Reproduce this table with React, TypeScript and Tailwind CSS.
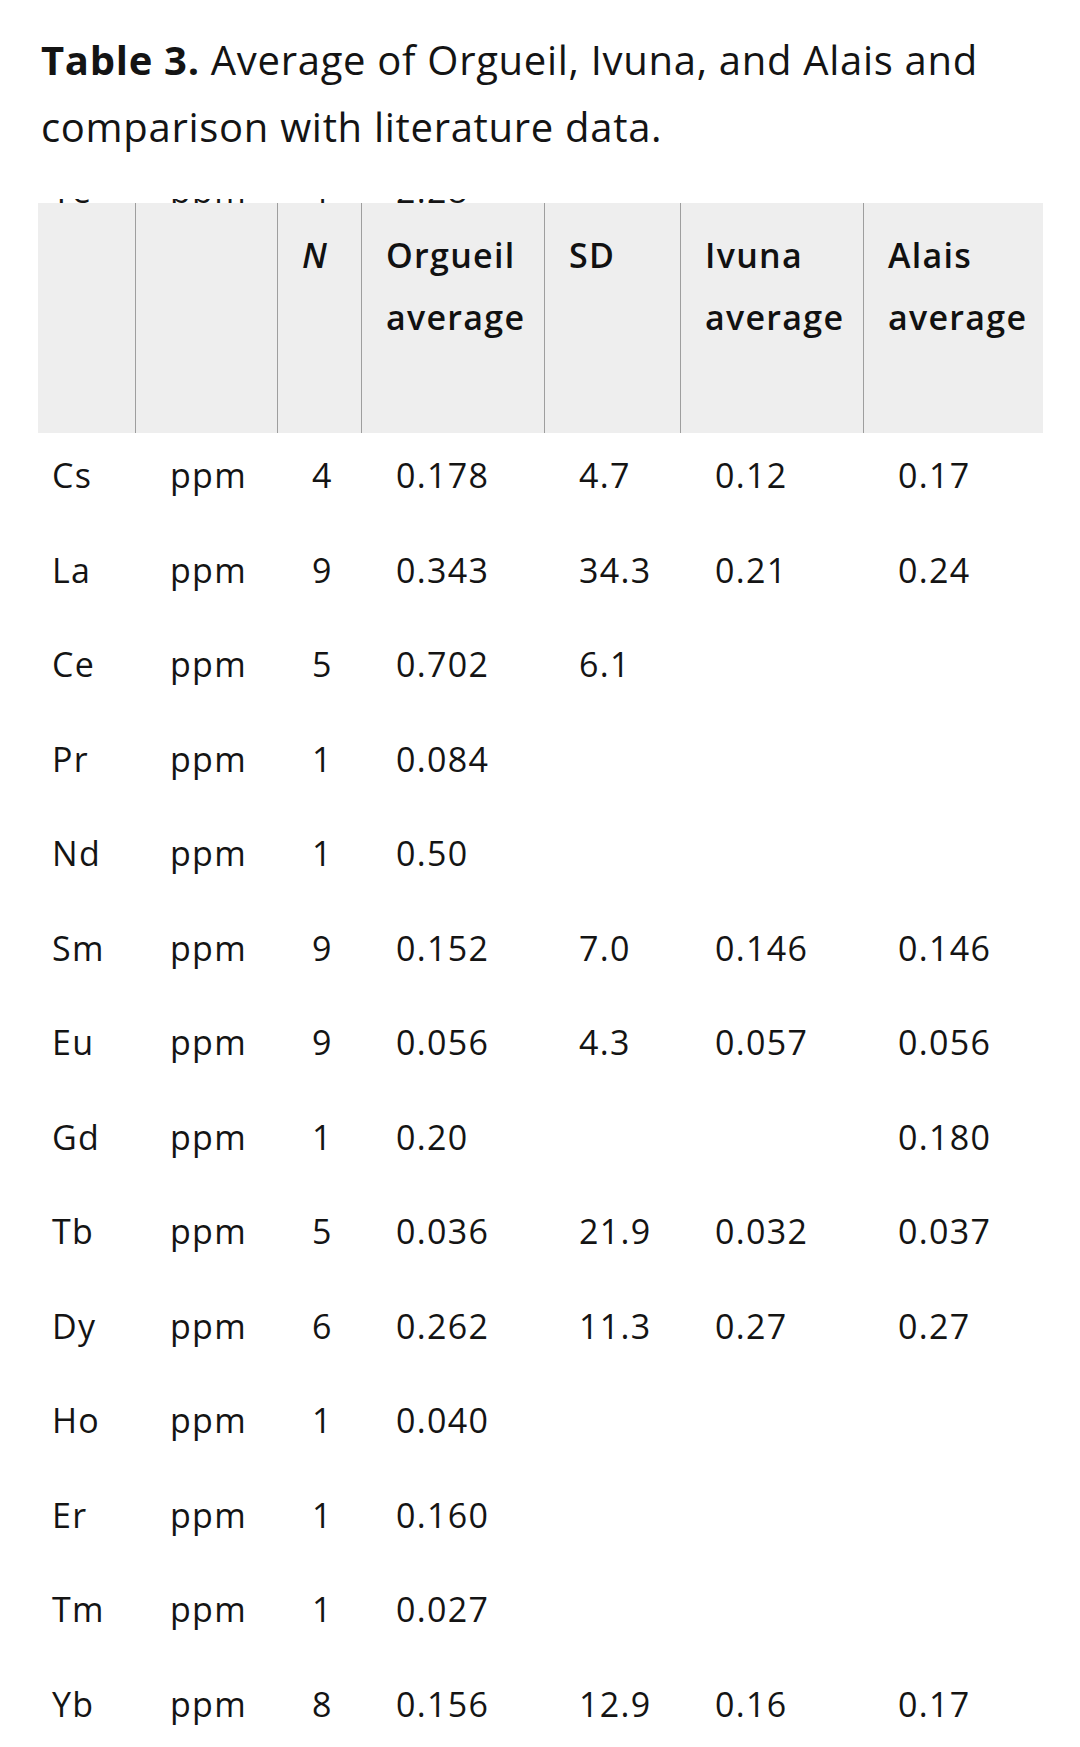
const rows: string[][] = [
  ["Cs", "ppm", "4", "0.178", "4.7", "0.12", "0.17"],
  ["La", "ppm", "9", "0.343", "34.3", "0.21", "0.24"],
  ["Ce", "ppm", "5", "0.702", "6.1", "", ""],
  ["Pr", "ppm", "1", "0.084", "", "", ""],
  ["Nd", "ppm", "1", "0.50", "", "", ""],
  ["Sm", "ppm", "9", "0.152", "7.0", "0.146", "0.146"],
  ["Eu", "ppm", "9", "0.056", "4.3", "0.057", "0.056"],
  ["Gd", "ppm", "1", "0.20", "", "", "0.180"],
  ["Tb", "ppm", "5", "0.036", "21.9", "0.032", "0.037"],
  ["Dy", "ppm", "6", "0.262", "11.3", "0.27", "0.27"],
  ["Ho", "ppm", "1", "0.040", "", "", ""],
  ["Er", "ppm", "1", "0.160", "", "", ""],
  ["Tm", "ppm", "1", "0.027", "", "", ""],
  ["Yb", "ppm", "8", "0.156", "12.9", "0.16", "0.17"],
];

// column widths shared by header and body
const widths = ["w-[98px]", "w-[142px]", "w-[84px]", "w-[183px]", "w-[136px]", "w-[183px]", "w-[179px]"];

function HeaderCell({ w, children, last }: { w: string; children?: React.ReactNode; last?: boolean }) {
  return (
    <div className={`${w} shrink-0 pl-[24px] pr-[6px] pt-[21px] leading-[62px] ${last ? "" : "border-r border-[#9e9e9e]"}`}>
      {children}
    </div>
  );
}

export default function App() {
  return (
    <div
      className="w-[1080px] h-[1747px] overflow-hidden bg-white text-[#141414]"
      style={{ fontFamily: '"Open Sans", "Noto Sans", sans-serif' }}
    >
      <h1 className="pl-[41px] pr-[40px] pt-[26px] text-[40px] leading-[67px] font-normal tracking-[0.7px]">
        <span className="font-bold">Table 3.</span> Average of Orgueil, Ivuna, and Alais and comparison with literature data.
      </h1>

      <div className="mt-[39px] ml-[38px] w-[1005px] tracking-[1.3px]">
        <div className="h-[4px] overflow-hidden">
          <div className="flex text-[34px] leading-[46px] -mt-[32px]">
            <div className={`${widths[0]} shrink-0 pl-[14px]`}>Te</div>
            <div className={`${widths[1]} shrink-0 pl-[34px]`}>ppm</div>
            <div className={`${widths[2]} shrink-0 pl-[34px]`}>1</div>
            <div className={`${widths[3]} shrink-0 pl-[34px]`}>2.28</div>
          </div>
        </div>

        <div className="flex h-[230px] bg-[#eeeeee] text-[34px] font-semibold text-[#111]">
          <HeaderCell w={widths[0]} />
          <HeaderCell w={widths[1]} />
          <HeaderCell w={widths[2]}>
            <span className="italic">N</span>
          </HeaderCell>
          <HeaderCell w={widths[3]}>Orgueil average</HeaderCell>
          <HeaderCell w={widths[4]}>SD</HeaderCell>
          <HeaderCell w={widths[5]}>Ivuna average</HeaderCell>
          <HeaderCell w={widths[6]} last>
            Alais average
          </HeaderCell>
        </div>

        <div className="text-[34px] leading-[46px]">
          {rows.map((r) => (
            <div key={r[0]} className="flex h-[94.5px] pt-[19px]">
              {r.map((v, i) => (
                <div key={i} className={`${widths[i]} shrink-0 ${i === 0 ? "pl-[14px]" : "pl-[34px]"}`}>
                  {v}
                </div>
              ))}
            </div>
          ))}
        </div>
      </div>
    </div>
  );
}
